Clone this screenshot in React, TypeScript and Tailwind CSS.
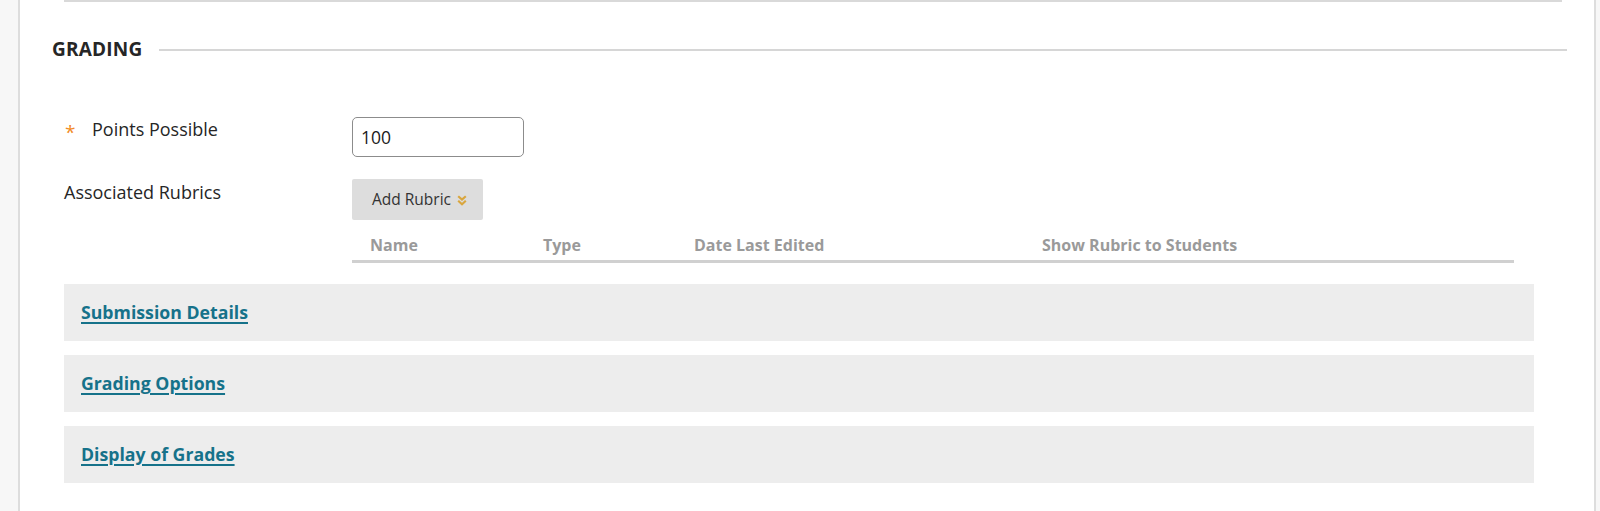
import React from "react";

const font = { fontFamily: '"Open Sans", "Noto Sans", sans-serif' };

function DoubleChevron() {
  return (
    <svg width="10" height="11" viewBox="0 0 10 11" className="ml-[6px] mt-[1px]">
      <path d="M1.2 1.2 L5 4.6 L8.8 1.2" fill="none" stroke="#d9a63e" strokeWidth="2.2" />
      <path d="M1.2 5.8 L5 9.2 L8.8 5.8" fill="none" stroke="#d9a63e" strokeWidth="2.2" />
    </svg>
  );
}

function Bar({ label }: { label: string }) {
  return (
    <div className="h-[57px] bg-[#ededed] flex items-center pl-[17px]">
      <a href="#" className="text-[17.7px] font-bold text-[#16728a] underline underline-offset-[3px] decoration-[1.5px]">
        {label}
      </a>
    </div>
  );
}

export default function App() {
  return (
    <div className="w-[1600px] h-[511px] flex bg-white overflow-hidden" style={font}>
      <div className="w-[20px] shrink-0 bg-[#f7f7f7] border-r-2 border-[#dddddd]" />
      <div className="flex-1 flex flex-col">
        <div className="ml-[44px] mr-[32px] h-[2px] bg-[#d9d9d9]" />
        <div className="flex items-start pl-[32px] pr-[27px] mt-[27px]">
          <h2 className="text-[19px] font-bold text-[#262626] leading-[40px] tracking-[0.2px]">GRADING</h2>
          <div className="flex-1 h-[2px] bg-[#d6d6d6] ml-[17px] mt-[20px]" />
        </div>

        <div className="pl-[44px] mt-[48px] flex">
          <div className="w-[288px] flex text-[18px] leading-[24px] text-[#262626]">
            <span className="w-[28px] pl-[1px] text-[#f28b25] text-[19px] leading-[31px]">*</span>
            <span>Points Possible</span>
          </div>
          <div className="w-[172px] h-[40px] border border-[#8c8c8c] rounded-[5px] flex items-center pl-[8px] text-[17.5px] text-[#1a1a1a]">
            100
          </div>
        </div>

        <div className="pl-[44px] mt-[22px] flex">
          <div className="w-[288px] pt-[1px] text-[18px] leading-[24px] text-[#262626]">Associated Rubrics</div>
          <div className="flex flex-col">
            <button className="w-[131px] h-[41px] bg-[#dddddd] rounded-[2px] flex items-center pl-[20px] text-[15.5px] text-[#333333]">
              Add Rubric
              <DoubleChevron />
            </button>
          </div>
        </div>

        <div className="pl-[332px] mt-[14px]">
          <div className="w-[1162px] flex border-b-[3px] border-[#d0d0d0] text-[16px] font-bold text-[#9a9a9a] leading-[22px] pb-[4px]">
            <div className="w-[173px] pl-[18px]">Name</div>
            <div className="w-[151px] pl-[18px]">Type</div>
            <div className="w-[348px] pl-[18px]">Date Last Edited</div>
            <div className="flex-1 pl-[18px]">Show Rubric to Students</div>
          </div>
        </div>

        <div className="ml-[44px] mr-[60px] mt-[21px] flex flex-col gap-[14px]">
          <Bar label="Submission Details" />
          <Bar label="Grading Options" />
          <Bar label="Display of Grades" />
        </div>
      </div>
      <div className="w-[6px] shrink-0 bg-[#f7f7f7] border-l-2 border-[#dddddd]" />
    </div>
  );
}
